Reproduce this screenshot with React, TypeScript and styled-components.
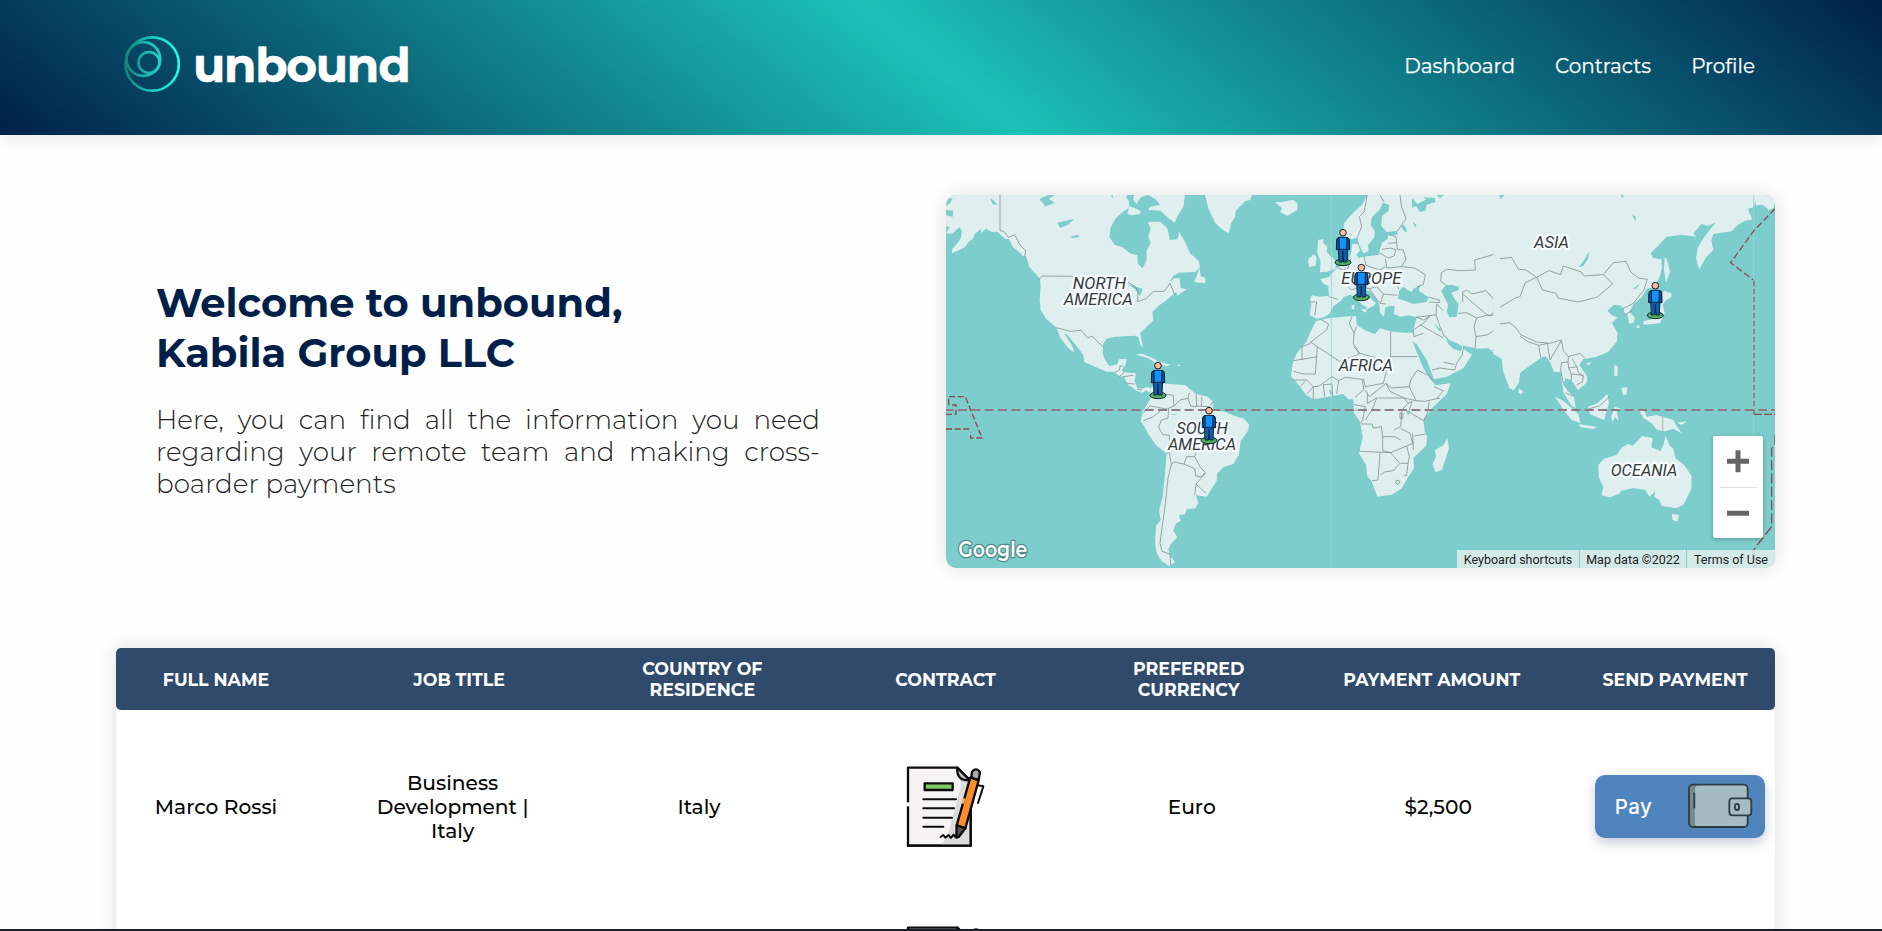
import React from "react";
import styled, { createGlobalStyle } from "styled-components";

const GlobalStyle = createGlobalStyle`
  * { box-sizing: border-box; }
  body {
    margin: 0;
    background: #fefefe;
    font-family: Montserrat, Inter, "Open Sans", sans-serif;
    overflow: hidden;
  }
  h1, p { margin: 0; }
`;

const Screen = styled.div`
  display: flex;
  flex-direction: column;
  height: 931px;
`;

const Page = styled.div`
  flex: 1;
  min-height: 0;
  overflow: hidden;
`;

const BottomEdge = styled.div`
  height: 2px;
  background: #1c1c2b;
`;

const Header = styled.header`
  display: flex;
  justify-content: space-between;
  height: 135px;
  padding: 0 127px 0 124px;
  background: linear-gradient(39deg, #00204a 0%, #1bc1b8 50%, #00204a 100%);
  box-shadow: 0 0 20px rgba(0, 0, 0, 0.12);
`;

const Brand = styled.div`
  display: flex;
  gap: 13px;
  padding-top: 35px;
`;

const BrandMark = styled.svg`
  width: 56px;
  height: 57px;
`;

const BrandName = styled.span`
  color: #fff;
  font-size: 47px;
  font-weight: 700;
  line-height: 61px;
  letter-spacing: -1.3px;
  -webkit-text-stroke: 0.5px #fff;
`;

const Nav = styled.nav`
  display: flex;
  padding-top: 54px;
  gap: 40px;
`;

const NavLink = styled.a`
  color: #fff;
  font-size: 20px;
  font-weight: 400;
  line-height: 24px;
  -webkit-text-stroke: 0.25px #fff;
`;

const Hero = styled.section`
  display: flex;
  justify-content: space-between;
  padding: 60px 107px 0 156px;
  height: 433px;
`;

const Intro = styled.div`
  width: 664px;
  padding-top: 83px;
`;

const Title = styled.h1`
  color: #00204a;
  font-size: 40px;
  font-weight: 700;
  line-height: 50px;
`;

const TitleLine = styled.span`
  display: block;
`;

const Lead = styled.p`
  margin-top: 26px;
  color: #222;
  font-size: 26.2px;
  font-weight: 300;
  line-height: 32px;
  text-align: justify;
`;

const MapCard = styled.div`
  position: relative;
  width: 829px;
  height: 373px;
  border-radius: 10px;
  overflow: hidden;
  background: #7dcdcc;
`;

const MapShadow = styled.div`
  height: 373px;
  border-radius: 10px;
  box-shadow: 0 0 20px rgba(0, 0, 0, 0.12);
`;

const MapSvg = styled.svg`
  display: block;
  width: 829px;
  height: 373px;
`;

const ZoomControl = styled.div`
  position: absolute;
  right: 12px;
  bottom: 30px;
  width: 50px;
  height: 102px;
  display: flex;
  flex-direction: column;
  align-items: center;
  background: #fff;
  border-radius: 2px;
  box-shadow: 0 1px 4px rgba(0, 0, 0, 0.3);
`;

const ZoomIcon = styled.svg`
  width: 24px;
  flex: 1;
`;

const ZoomRule = styled.div`
  width: 37px;
  height: 1px;
  background: #dedede;
`;

const Credits = styled.div`
  position: absolute;
  right: 0;
  bottom: 0;
  display: flex;
  gap: 1px;
  height: 18px;
  font-family: Roboto, sans-serif;
  font-size: 12.5px;
  line-height: 19px;
  color: #222;
`;

const Credit = styled.span<{ $w: number }>`
  width: ${(p) => p.$w}px;
  text-align: center;
  white-space: nowrap;
  background: rgba(240, 243, 243, 0.75);
`;

const Table = styled.section`
  margin: 80px 107px 0 116px;
  border-radius: 5px;
  background: #fff;
  box-shadow: 0 0 20px rgba(0, 0, 0, 0.13);
  height: 500px;
`;

const TableHead = styled.div`
  display: flex;
  justify-content: space-between;
  align-items: center;
  height: 62px;
  border-radius: 5px;
  background: #2f4a6b;
  color: #fff;
`;

const HeadCell = styled.div`
  width: 200px;
  text-align: center;
  font-size: 17.4px;
  font-weight: 700;
  line-height: 21px;
  white-space: pre-line;
`;

const Rows = styled.div`
  padding-top: 17px;
`;

const Row = styled.div`
  display: grid;
  grid-template-columns: 200px repeat(5, 219.6px) 1fr;
  column-gap: 26.8px;
  align-items: center;
  height: 160px;
`;

const Cell = styled.div`
  text-align: center;
  font-size: 20.2px;
  font-weight: 500;
  line-height: 24px;
  white-space: pre-line;
  color: #050505;
`;

const ContractIcon = styled.svg`
  display: block;
  width: 80px;
  height: 84px;
  margin: 0 auto;
`;

const ActionCell = styled.div`
  padding: 0 0 2px 20px;
`;

const PayButton = styled.button`
  display: flex;
  justify-content: space-between;
  align-items: center;
  width: 170px;
  height: 63px;
  padding: 0 12px 0 20px;
  border: 0;
  border-radius: 10px;
  background: #4f84bd;
  color: #fff;
  font-family: Inter, sans-serif;
  font-size: 20.5px;
  font-weight: 500;
  letter-spacing: 0.4px;
  box-shadow: 0 5px 12px rgba(40, 50, 110, 0.25);
`;

const WalletSvg = styled.svg`
  width: 66px;
  height: 46px;
`;

function Logo() {
  return (
    <BrandMark viewBox="0 0 56 57">
      <defs>
        <linearGradient id="ring" x1="0" y1="0" x2="56" y2="0" gradientUnits="userSpaceOnUse">
          <stop offset="0" stopColor="#158077" />
          <stop offset="0.5" stopColor="#1fc4bb" />
          <stop offset="1" stopColor="#20fff3" />
        </linearGradient>
      </defs>
      <g fill="none" stroke="url(#ring)" strokeWidth="2.6">
        <circle cx="28.2" cy="29" r="26.6" />
        <circle cx="19.3" cy="24" r="16.9" />
        <circle cx="25" cy="27.5" r="10.5" />
      </g>
    </BrandMark>
  );
}

function Person({ x, y }: { x: number; y: number }) {
  return (
    <g transform={`translate(${x} ${y})`} stroke="#10243a" strokeWidth="3">
      <ellipse cx="0" cy="-9" rx="24" ry="10" fill="#52b05c" />
      <path d="M-14,-56 L-12,-10 H-2 L0,-42 L2,-10 H12 L14,-56 Z" fill="#0d60b0" />
      <path d="M-19,-74 Q-19,-84 -9,-84 H9 Q19,-84 19,-74 V-48 H-19 Z" fill="#1292fa" />
      <path d="M-19,-74 Q-19,-82 -12,-83 L-11,-47 H-20 Z M19,-74 Q19,-82 12,-83 L11,-47 H20 Z" fill="#0c4fa5" />
      <circle cx="0" cy="-98" r="10" fill="#fdbc94" />
    </g>
  );
}

type LabelLine = { x: number; y: number; w: number; t: string };

function Label({ lines }: { lines: LabelLine[] }) {
  return (
    <text>
      {lines.map((l) => (
        <tspan key={l.t} x={l.x} y={l.y} textLength={l.w} lengthAdjust="spacingAndGlyphs">
          {l.t}
        </tspan>
      ))}
    </text>
  );
}

function WorldMap() {
  return (
    <MapSvg viewBox="18 15 2487 1119">
      {/* Americas and the North Atlantic */}
      <g fill="#dfefef">
        <path d="M18,15 V28 L38,24 30,40 18,48 V60 L40,62 38,80 18,76 V108 L30,112 18,130 38,131 50,118 60,112 66,124 62,146 50,162 35,180 36,190 75,172 86,155 98,148 104,132 122,117 124,128 138,116 155,126 172,125 195,146 208,148 218,170 240,188 248,198 258,198 268,230 300,266 302,290 299,330 302,360 318,386 350,413 360,442 385,475 402,487 398,470 372,430 382,434 415,475 430,495 433,516 465,530 500,545 522,545 538,558 552,560 562,582 590,602 606,608 620,601 628,610 634,596 620,591 605,597 592,594 583,575 588,550 550,547 545,540 556,525 560,508 538,507 532,523 508,528 494,508 488,490 489,462 500,446 525,440 585,437 595,441 600,462 608,474 604,445 600,430 622,408 640,392 637,366 655,348 680,330 708,306 712,317 740,298 722,294 719,265 704,264 688,276 700,258 716,248 765,246 780,232 776,212 750,190 735,155 718,126 712,148 690,150 682,115 660,95 630,95 624,100 632,115 625,140 632,160 620,180 620,210 608,235 594,222 592,196 570,190 548,172 524,164 508,140 512,112 528,84 545,68 566,55 568,36 558,22 562,15 Z" />
        <path d="M568,48 L602,62 600,72 575,76 562,72 Z M582,15 H620 L600,24 590,42 580,30 Z M625,15 H735 L730,50 714,75 704,98 680,80 662,62 625,60 630,50 660,45 650,30 Z M650,50 L682,62 700,82 690,84 660,62 Z" />
        <path d="M778,233 L782,258 796,264 796,280 762,276 770,258 Z M588,494 L605,491 630,500 655,514 690,524 655,524 625,505 Z M668,524 L692,522 680,530 Z M714,524 h7 v4 h-7 Z" />
        <path d="M632,595 L650,578 700,583 735,585 768,612 802,620 818,634 820,660 850,664 885,678 912,686 928,704 924,722 902,754 897,794 880,822 850,832 832,850 830,872 800,920 768,916 775,940 766,955 740,958 735,973 717,975 722,993 708,1000 700,1022 712,1042 692,1062 685,1078 692,1100 705,1116 688,1129 664,1112 650,1088 645,1062 648,1008 662,990 657,962 668,920 675,850 680,790 650,768 625,732 612,708 602,694 608,665 632,625 Z" />
        <path d="M795,15 L805,55 825,98 846,118 866,130 874,98 886,80 886,64 915,34 930,30 936,15 Z M1005,36 L1028,36 1058,29 1072,40 1072,60 1042,77 1020,66 1026,54 Z" />
      </g>
      <g fill="#7dcdcc">
        <path d="M298,28 L325,15 345,16 326,26 344,38 315,50 310,40 Z M352,98 L372,94 404,86 384,104 360,114 Z M390,140 L412,134 420,140 400,145 Z M150,24 L164,34 172,46 158,42 Z M560,280 L592,292 608,296 600,318 588,300 Z M690,672 l22,0 -8,3 Z" />
        <path d="M512,15 L520,26 518,15 Z" />
      </g>
      <g fill="none" stroke="#7c8687" strokeWidth="2.2" strokeLinejoin="round">
        <path d="M180,15 V122 L192,124 205,142 224,134 240,165 257,182 254,200 M296,268 L308,258 408,259 M564,276 L586,290 594,306 593,335 618,326 640,304 672,304 690,280 704,314 M350,413 L390,424 424,421 443,444 456,438 488,470 M524,548 L538,540 540,528 550,528 M538,560 L552,548 M550,560 L580,556 M560,580 L582,582 M592,598 L606,600" />
        <path d="M652,586 L655,606 674,612 700,616 702,648 686,654 684,684 664,690 656,712 668,734 688,736 690,760 M610,668 L630,648 686,658 M610,692 L640,680 664,660 M702,648 L720,630 744,625 748,608 M744,625 L752,648 770,650 768,612 M770,648 L808,650 818,636 M786,620 L784,650 M680,790 L688,788 694,824 702,816 732,822 740,800 764,800 768,788 M732,822 L764,836 768,858 784,860 796,848 780,830 764,800 M796,850 L768,882 798,910 M768,882 L764,916 M694,824 L684,864 676,940 668,1000 660,1060 666,1084 690,1092 692,1128" />
      </g>
      {/* Europe, Africa and western Asia */}
      <g transform="translate(1020 0)">
        <g fill="#dfefef">
          <path d="M262,15 L245,46 222,66 205,84 192,100 189,128 196,144 215,148 232,142 238,165 250,190 266,184 264,165 282,144 285,125 272,105 276,82 300,58 308,38 328,45 326,62 306,78 304,108 320,126 352,122 352,134 325,136 322,148 306,158 300,176 298,194 270,198 250,200 236,204 228,192 240,182 234,162 216,162 214,186 206,208 186,226 170,234 146,262 120,267 132,282 145,288 147,318 118,320 96,316 90,328 94,346 88,376 112,386 132,382 150,370 160,348 182,334 192,320 212,314 230,326 246,344 262,352 256,360 280,348 288,340 268,322 252,304 268,302 288,324 298,344 300,368 312,380 316,352 330,348 344,348 342,372 362,380 386,376 410,382 400,420 396,440 404,462 430,504 446,530 460,568 500,560 550,535 576,494 550,476 548,466 590,476 626,475 645,492 665,506 670,540 690,594 702,600 717,576 720,548 760,520 800,492 V15 Z" />
          <path d="M108,393 L148,384 190,380 228,378 230,405 258,422 285,432 300,415 330,424 370,428 397,428 404,460 432,515 455,566 466,586 512,580 500,612 460,650 430,690 434,722 442,742 438,768 400,804 402,835 385,860 365,895 336,914 292,920 274,872 262,860 258,824 237,790 248,742 240,695 222,668 220,628 205,628 190,612 145,620 100,628 78,614 60,590 33,558 38,520 50,490 80,454 90,430 Z" />
          <path d="M502,745 L507,775 486,840 466,846 458,822 468,800 465,780 490,766 Z M114,150 L130,147 130,160 142,170 140,186 168,214 166,236 142,245 120,247 122,214 112,188 Z M86,206 L102,193 110,204 106,228 88,231 84,216 Z M718,596 L730,605 722,612 715,608 Z M215,345 L224,346 222,358 215,356 Z M242,358 L262,358 256,368 Z M218,172 L230,178 236,190 222,194 Z" />
        </g>
        <g fill="#7dcdcc">
          <path d="M354,326 L358,300 372,290 382,300 396,305 400,296 422,285 416,302 446,322 440,336 400,342 374,332 Z M484,304 L495,288 514,284 536,290 536,300 514,308 526,330 536,342 530,380 508,382 500,362 505,345 492,320 Z M494,434 L508,450 540,464 548,472 542,484 522,478 505,462 Z M398,455 L410,462 440,510 462,568 455,572 430,535 415,498 Z" />
          <path d="M396,24 L412,42 440,28 428,22 464,24 466,36 440,44 436,62 420,66 408,48 396,54 Z M362,108 L372,104 382,124 374,126 Z M398,94 L410,106 404,112 Z M655,24 L668,15 680,15 664,28 Z M470,15 L492,15 480,24 Z M672,294 L684,286 706,288 690,292 676,300 Z M460,398 L484,420 478,424 Z M378,662 h14 l-8,14 Z M396,736 l6,30 -4,-4 Z M148,598 l10,10 -8,6 Z" />
        </g>
        <g fill="none" stroke="#7c8687" strokeWidth="2.2" strokeLinejoin="round">
          <path d="M262,15 L252,66 238,80 245,110 232,142 M312,36 L300,15 M360,15 L364,48 378,86 352,124 M328,134 L348,140 350,158 325,160 M306,178 L332,174 348,180 342,198 325,204 300,190 M350,158 L352,178 370,180 378,208 364,230 320,234 316,206 M364,230 L404,234 436,254 430,284 412,290 M252,200 L258,226 300,240 316,230 M212,206 L204,235 190,240 174,234 M204,290 L215,300 240,290 268,296 290,290 302,260 M290,290 L310,312 352,316 M268,296 L286,322 300,340 318,342 M310,312 L302,338 M320,260 L350,278 356,298 M146,320 L174,328 M90,336 L110,336 104,376 M446,322 L478,330 478,338 448,336 M470,342 L468,374 408,382 M470,342 L490,362 M468,374 L480,410 494,442 M410,382 L430,390 450,378 M400,420 L430,400 450,378 M420,404 L490,444 M400,420 L402,440 430,430" />
          <path d="M482,250 L500,238 540,242 586,240 584,210 652,190 658,204 694,198 722,236 746,240 780,262 M484,250 L482,274 505,290 M548,336 L548,306 560,300 576,312 618,302 640,326 716,324 M548,312 L620,374 632,378 652,350 690,352 716,324 720,300 736,296 740,270 764,260 M534,370 L560,368 590,384 620,376 660,374 684,380 M590,384 L582,410 588,440 585,475 M588,440 L624,434 656,410 660,386 684,380 708,398 712,420 M684,410 L660,446 650,476 636,482 M708,398 L722,430 760,456 780,462 M722,436 L760,466 780,468 M640,340 L668,346 660,356 640,350 M456,540 L480,534 524,540 530,520 546,496 550,476 M524,524 L490,516" />
          <path d="M122,388 L146,402 140,420 92,456 112,470 178,514 238,492 220,460 222,430 208,400 216,380 M92,460 L66,470 66,508 40,512 M112,470 L106,552 70,552 40,544 M66,508 L112,500 M230,410 L222,430 M332,424 V500 L412,500 M332,500 L326,510 M222,470 L240,490 326,514 310,580 256,590 250,566 M176,572 L196,562 246,568 252,598 225,622 M176,572 L170,612 M156,560 L176,572 M156,560 L118,588 100,590 80,570 40,570 M60,590 L78,572 M80,612 L100,590 100,628 M134,620 L130,584 156,582 158,618 M256,600 L268,620 318,580 334,594 388,590 392,570 412,540 M262,612 L262,640 290,624 372,624 408,632 434,634 480,624 M318,580 L330,604 372,624 M388,590 L408,632 M412,540 L446,556 462,578 M462,590 L490,602 470,626 M222,644 L256,650 248,690 240,700 M290,624 L276,660 256,690 M220,660 L250,662 M372,624 L384,640 366,660 362,710 342,720 M384,640 L396,634 M384,664 L430,692 M388,660 L396,634 M244,702 L276,702 280,714 304,710 308,740 344,740 362,750 M238,784 L332,788 308,782 308,740 M300,790 L294,870 276,872 M332,788 L360,820 340,842 314,846 300,856 M332,788 L380,768 398,760 390,730 362,716 M404,738 L436,732 M380,768 L388,800 384,820 362,820 M384,820 L380,856 372,856 M448,634 L442,670 430,692 M350,870 l10,4 -6,10 -8,-6 Z M360,668 l10,4 -4,16 -6,-4 Z M398,730 L400,780" />
        </g>
      </g>
      {/* East Asia and Oceania */}
      <g transform="translate(1680 0)">
        <g fill="#dfefef">
          <path d="M-20,15 H825 V36 L820,55 806,60 790,45 768,46 766,32 762,52 744,56 756,88 732,94 712,106 695,124 665,128 640,132 634,150 640,180 618,202 598,238 588,205 594,172 612,142 648,96 624,108 604,102 580,130 588,140 545,134 500,140 476,166 452,190 460,204 484,208 486,236 476,268 460,292 440,296 425,322 402,340 388,366 404,382 402,397 388,402 383,376 372,366 370,352 352,356 338,364 352,382 336,400 353,430 350,455 325,485 290,500 250,508 238,524 262,560 260,578 234,600 214,570 196,565 190,584 204,604 222,622 227,655 212,644 190,606 182,546 162,545 150,516 138,500 122,500 80,530 60,548 56,578 40,600 28,595 10,545 5,506 -20,492 Z" />
          <path d="M494,202 L500,206 510,246 498,280 492,240 Z M492,302 L514,310 514,322 496,332 488,346 494,368 480,400 430,404 430,394 460,386 480,356 482,320 Z M408,412 L416,404 420,415 Z M343,526 L353,528 352,558 343,558 Z M363,595 L382,590 380,612 370,616 Z M260,520 L274,516 266,528 Z M165,620 L190,632 235,672 242,700 215,690 195,665 Z M238,703 L292,711 280,717 240,711 Z M265,650 L292,640 322,612 327,640 312,690 270,672 Z M334,680 L344,650 366,658 350,664 356,692 346,682 336,695 Z M418,662 L434,664 440,680 470,675 520,690 528,706 545,730 520,716 495,724 472,720 455,700 430,684 Z M530,698 L562,694 545,704 Z M58,596 L70,605 62,612 55,608 Z" />
          <path d="M295,825 L312,806 350,795 366,772 384,762 398,768 426,738 458,744 454,772 482,784 490,764 497,738 510,768 520,776 526,804 552,824 575,858 574,898 550,944 528,955 485,948 478,930 462,920 466,904 448,920 436,900 400,894 364,902 356,912 330,922 304,916 310,892 296,860 Z M515,972 L537,975 532,995 518,990 Z" />
        </g>
        <g fill="#7dcdcc">
          <path d="M235,232 L250,214 268,184 264,206 250,228 Z M322,362 L342,344 366,348 356,360 372,370 350,382 336,376 Z M396,74 L408,80 406,92 Z M362,15 l8,10 0,-10 Z M398,296 L420,282 408,296 Z M-2,15 h16 l-14,12 Z" />
        </g>
        <g fill="none" stroke="#7c8687" strokeWidth="2.2" strokeLinejoin="round">
          <path d="M0,206 L34,202 56,238 78,240 110,262 146,242 182,254 190,228 244,246 252,258 310,254 340,218 378,214 392,246 416,264 442,268 432,300 414,322 400,340 368,356 M110,262 L76,278 60,320 46,324 0,352 M110,262 L128,300 168,310 174,324 234,336 290,322 338,282 310,254 M0,402 L30,398 50,416 62,434 110,456 150,460 184,450 190,482 205,500 240,490 256,506 M60,438 L86,456 116,466 142,460 M116,466 L122,502 M142,460 L150,510 184,452 M205,500 L204,516 184,518 182,540 190,580 M204,516 L206,534 230,530 236,548 250,560 M216,506 L230,530 M214,570 L214,552 250,556 248,576 230,584 M206,534 L214,552 M196,608 L216,618 M268,656 L298,648 326,622 M376,374 L396,362" />
          <path d="M488,678 V722" stroke="#bcc6c6" strokeWidth="5" />
        </g>
      </g>
      <g fill="none" stroke="#97d6d3" strokeWidth="2.5">
        <path d="M1174,15 V1134 M2441,15 V1134" />
      </g>
      <g fill="none" stroke="#8e4a4c" strokeWidth="4">
        <path d="M18,660 H2505" stroke="#8f7c80" strokeWidth="5.5" strokeDasharray="27 13" strokeDashoffset="4" />
        <path d="M26,645 V620 H76 L126,744 H92 V726 M18,717 H90 M18,673 H48 V645 H26" strokeDasharray="18 8" />
        <path d="M2505,56 L2442,122 2372,218 2440,270" strokeDasharray="20 9" />
        <path d="M2442,272 V673" stroke="#857e82" strokeWidth="5" strokeDasharray="17 7" />
        <path d="M2442,673 H2505" strokeDasharray="24 6" />
        <path d="M2505,734 V764 L2495,776 V1010 L2442,1078 V1134" strokeDasharray="30 10" />
      </g>
      <g
        fill="#333b3e"
        stroke="#f7fbfb"
        strokeWidth="14"
        strokeLinejoin="round"
        paintOrder="stroke"
        fontFamily="Roboto, sans-serif"
        fontStyle="italic"
        fontSize="52"
      >
        <Label
          lines={[
            { x: 398, y: 298, w: 160, t: "NORTH" },
            { x: 371, y: 345, w: 207, t: "AMERICA" },
          ]}
        />
        <Label
          lines={[
            { x: 709, y: 732, w: 155, t: "SOUTH" },
            { x: 684, y: 779, w: 204, t: "AMERICA" },
          ]}
        />
        <Label lines={[{ x: 1204, y: 282, w: 180, t: "EUROPE" }]} />
        <Label lines={[{ x: 1196, y: 542, w: 163, t: "AFRICA" }]} />
        <Label lines={[{ x: 1782, y: 173, w: 105, t: "ASIA" }]} />
        <Label lines={[{ x: 2012, y: 859, w: 200, t: "OCEANIA" }]} />
      </g>
      <Person x={1209} y={226} />
      <Person x={1264} y={331} />
      <Person x={654} y={625} />
      <Person x={807} y={760} />
      <Person x={2146} y={385} />
      <text
        x="55"
        y="1102"
        textLength="207"
        lengthAdjust="spacingAndGlyphs"
        fontFamily="Montserrat, Lato, sans-serif"
        fontWeight="600"
        fontSize="64"
        fill="#fff"
        stroke="#4f8a8a"
        strokeWidth="8"
        strokeLinejoin="round"
        paintOrder="stroke"
      >
        Google
      </text>
    </MapSvg>
  );
}

function Contract() {
  return (
    <ContractIcon viewBox="3 0 240 252">
      <g stroke="#0c0c0c" strokeWidth="7" strokeLinejoin="round" strokeLinecap="round">
        <path d="M12,8 H160 L200,48 V242 H12 Z" fill="#f6f4f5" />
        <path d="M158,12 L172,60 130,215 112,239 H197 V52 Z" fill="#dcdcdd" stroke="none" />
        <path d="M12,112 V124" stroke="#fff" strokeWidth="9" strokeLinecap="butt" />
        <path d="M160,8 Q156,48 198,46 Z" fill="#bbb" />
        <path d="M200,100 V242 H12" fill="none" />
        <rect x="62" y="55" width="84" height="20" fill="#7dcc63" />
        <path d="M58,103 H156 M58,130 H150 M58,158 H144 M58,185 H118 M110,216 L118,210 124,218 134,210 140,219 149,209 154,216 160,212" fill="none" strokeWidth="6" />
        <path d="M218,60 L238,64 222,114" fill="none" strokeWidth="6" />
        <path d="M204,40 Q200,22 208,16 Q220,8 228,22 L224,44 Z" fill="#aaa" />
        <path d="M199,37 L224,46 184,190 158,181 Z" fill="#ff8c2c" />
        <path d="M158,181 L184,190 164,216 157,218 Z" fill="#5b5658" />
        <path d="M180,100 L176,116" stroke="#ffb36b" strokeWidth="8" strokeLinecap="butt" />
      </g>
    </ContractIcon>
  );
}

function Wallet() {
  return (
    <WalletSvg viewBox="0 0 198 138">
      <path d="M24,5 H172 Q182,5 182,17 V121 Q182,132 170,132 H18 Q6,132 6,120 V18 Q6,5 18,5 Z" fill="#a4bcc0" />
      <path d="M18,5 H34 Q24,8 24,20 V120 Q24,130 32,132 H18 Q6,132 6,120 V18 Q6,5 18,5 Z" fill="#76898b" />
      <g stroke="#2f3d45" strokeWidth="5.5" fill="none" strokeLinejoin="round">
        <rect x="6" y="5" width="176" height="127" rx="12" />
        <path d="M22,29 V76" />
        <rect x="127" y="46" width="66" height="51" rx="9" fill="#a4bcc0" />
        <rect x="144" y="63" width="12" height="18" rx="6" />
      </g>
    </WalletSvg>
  );
}

const columns = [
  "FULL NAME",
  "JOB TITLE",
  "COUNTRY OF\nRESIDENCE",
  "CONTRACT",
  "PREFERRED\nCURRENCY",
  "PAYMENT AMOUNT",
  "SEND PAYMENT",
];

const team = [
  { name: "Marco Rossi", job: "Business\nDevelopment |\nItaly", country: "Italy", currency: "Euro", amount: "$2,500" },
  { name: "", job: "", country: "", currency: "", amount: "" },
];

export default function App() {
  return (
    <Screen>
      <GlobalStyle />
      <Page>
        <Header>
          <Brand>
            <Logo />
            <BrandName>unbound</BrandName>
          </Brand>
          <Nav>
            <NavLink>Dashboard</NavLink>
            <NavLink>Contracts</NavLink>
            <NavLink>Profile</NavLink>
          </Nav>
        </Header>
        <Hero>
          <Intro>
            <Title>
              <TitleLine>Welcome to unbound,</TitleLine>
              <TitleLine>Kabila Group LLC</TitleLine>
            </Title>
            <Lead>
              Here, you can find all the information you need regarding your remote team and making cross-boarder
              payments
            </Lead>
          </Intro>
          <MapShadow>
            <MapCard>
              <WorldMap />
              <ZoomControl>
                <ZoomIcon viewBox="0 0 24 24">
                  <path d="M1,12 H23 M12,1 V23" stroke="#666" strokeWidth="5" />
                </ZoomIcon>
                <ZoomRule />
                <ZoomIcon viewBox="0 0 24 24">
                  <path d="M1,12 H23" stroke="#666" strokeWidth="5" />
                </ZoomIcon>
              </ZoomControl>
              <Credits>
                <Credit $w={122}>Keyboard shortcuts</Credit>
                <Credit $w={106}>Map data ©2022</Credit>
                <Credit $w={88}>Terms of Use</Credit>
              </Credits>
            </MapCard>
          </MapShadow>
        </Hero>
        <Table>
          <TableHead>
            {columns.map((label) => (
              <HeadCell key={label}>{label}</HeadCell>
            ))}
          </TableHead>
          <Rows>
            {team.map((m, i) => (
              <Row key={i}>
                <Cell>{m.name}</Cell>
                <Cell>{m.job}</Cell>
                <Cell>{m.country}</Cell>
                <Contract />
                <Cell>{m.currency}</Cell>
                <Cell>{m.amount}</Cell>
                <ActionCell>
                  {m.name && (
                    <PayButton>
                      Pay
                      <Wallet />
                    </PayButton>
                  )}
                </ActionCell>
              </Row>
            ))}
          </Rows>
        </Table>
      </Page>
      <BottomEdge />
    </Screen>
  );
}
